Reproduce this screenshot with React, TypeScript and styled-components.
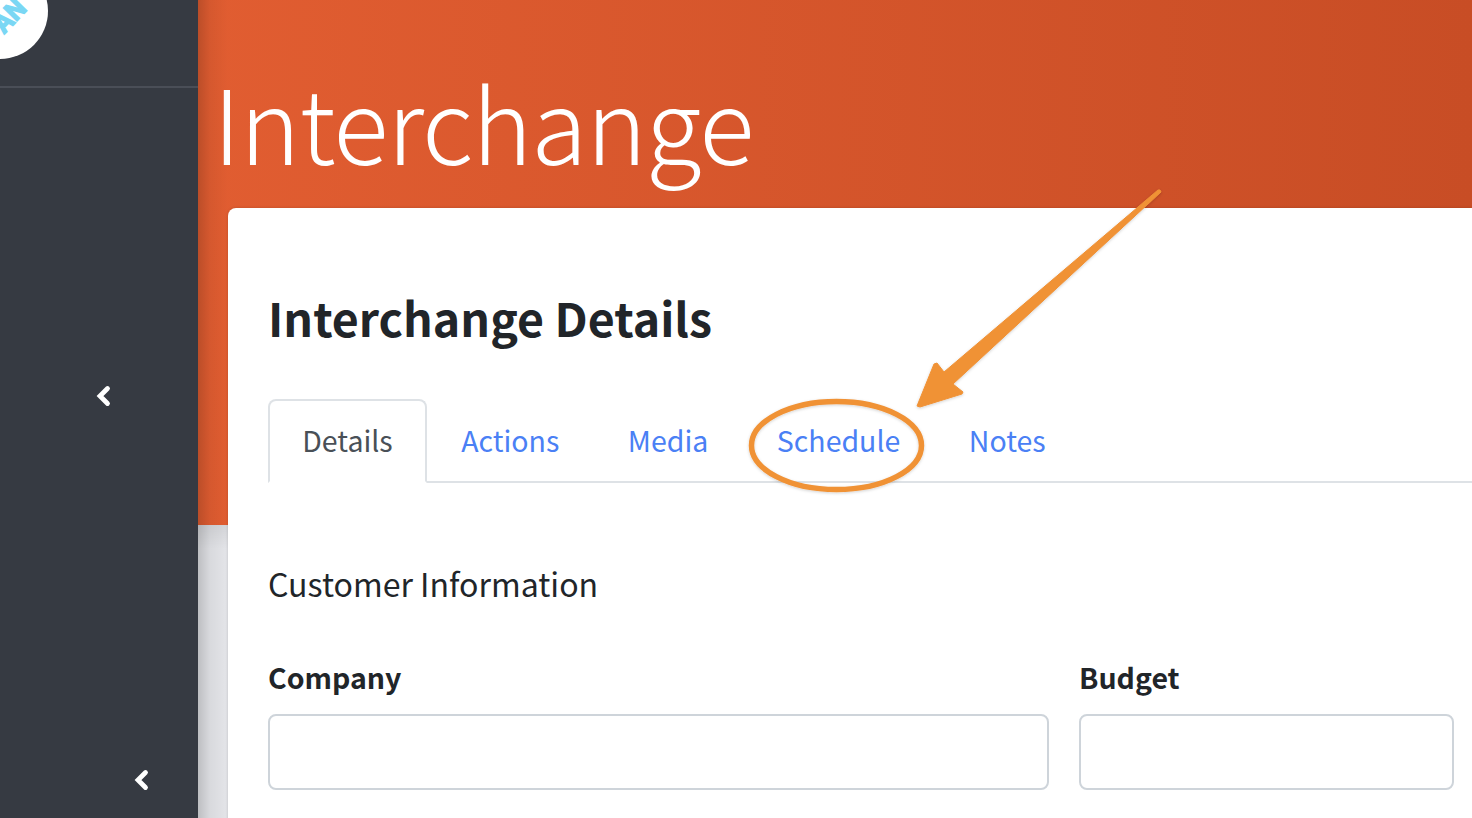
import React from "react";
import styled, { createGlobalStyle } from "styled-components";

const Global = createGlobalStyle`
  html, body { margin: 0; padding: 0; height: 100%; overflow: hidden; background: #e4e5e9; }
  #root { height: 100%; }
  * { box-sizing: border-box; }
`;

const Page = styled.div`
  position: relative;
  display: flex;
  width: 1472px;
  height: 818px;
  overflow: hidden;
  font-family: "Noto Sans CJK JP", "Noto Sans", sans-serif;
`;

const Sidebar = styled.aside`
  position: relative;
  flex: 0 0 198px;
  display: flex;
  flex-direction: column;
  background: #363a42;
  z-index: 2;
`;

const Brand = styled.div`
  position: relative;
  height: 88px;
  flex: none;
  border-bottom: 2px solid #4a4e57;
  overflow: hidden;
`;

const LogoDisc = styled.div`
  position: absolute;
  left: -48px;
  top: -37px;
  width: 96px;
  height: 96px;
  border-radius: 50%;
  background: #fff;
  overflow: hidden;
`;

const LogoText = styled.span`
  position: absolute;
  left: 39px;
  top: 38px;
  font-size: 25px;
  line-height: 26px;
  font-weight: 700;
  color: #7ad7f4;
  -webkit-text-stroke: 1.5px #7ad7f4;
  transform: rotate(-46deg);
`;

const SideNav = styled.div`
  flex: 1;
  display: flex;
  flex-direction: column;
  padding: 297px 0 27px 95px;
  justify-content: space-between;
`;

const Toggle = styled.svg<{ $shift?: number }>`
  display: block;
  width: 18px;
  height: 22px;
  margin-left: ${(p) => p.$shift ?? 0}px;
`;

const Main = styled.main`
  flex: 1;
  min-width: 0;
  position: relative;
  background: #e4e5e9;
  &::before {
    content: "";
    position: absolute;
    left: 0;
    top: 0;
    bottom: 0;
    width: 30px;
    background: linear-gradient(90deg, rgba(0, 0, 0, 0.17), rgba(0, 0, 0, 0.05) 40%, rgba(0, 0, 0, 0));
    z-index: 1;
    pointer-events: none;
  }
`;

const Hero = styled.header`
  position: relative;
  height: 525px;
  padding: 58px 0 0 15px;
  background: linear-gradient(90deg, #e15d31 0%, #c84d25 100%);
  &::after {
    content: "";
    position: absolute;
    left: 0;
    right: 0;
    top: 100%;
    height: 24px;
    background: linear-gradient(180deg, rgba(0, 0, 0, 0.07), rgba(0, 0, 0, 0));
  }
`;

const HeroTitle = styled.h1`
  margin: 0;
  font-size: 102.4px;
  font-weight: 300;
  line-height: 124px;
  color: #fff;
  letter-spacing: -1px;
`;

const Card = styled.section`
  position: relative;
  z-index: 2;
  margin: -317px 0 0 30px;
  height: 700px;
  padding: 77px 0 0 40px;
  background: #fff;
  border-radius: 8px 0 0 0;
  box-shadow: 0 0 3px rgba(0, 0, 0, 0.18);
`;

const CardTitle = styled.h2`
  margin: 0 0 50px;
  font-size: 46.5px;
  line-height: 64px;
  font-weight: 700;
  color: #212529;
`;

const Tabs = styled.nav`
  display: flex;
  height: 84px;
  border-bottom: 2px solid #dee2e6;
`;

const Tab = styled.a<{ $active?: boolean }>`
  display: block;
  height: 84px;
  padding: 18px 32.25px 0;
  font-size: 28.5px;
  line-height: 42px;
  color: ${(p) => (p.$active ? "#495057" : "#4a80f5")};
  background: ${(p) => (p.$active ? "#fff" : "transparent")};
  border: 2px solid ${(p) => (p.$active ? "#dee2e6" : "transparent")};
  border-bottom-color: ${(p) => (p.$active ? "#fff" : "transparent")};
  border-radius: 8px 8px 0 0;
`;

const SectionTitle = styled.h3`
  margin: 77px 0 51px;
  font-size: 32.1px;
  line-height: 46px;
  font-weight: 400;
  color: #212529;
`;

const FormRow = styled.div`
  display: grid;
  grid-template-columns: 781px 375px;
  column-gap: 30px;
`;

const Field = styled.div`
  display: flex;
  flex-direction: column;
  gap: 17px;
`;

const Label = styled.label`
  font-size: 28.5px;
  line-height: 40px;
  font-weight: 700;
  color: #212529;
`;

const Input = styled.input`
  height: 76px;
  border: 2px solid #ced4da;
  border-radius: 8px;
  background: #fff;
`;

const Annotation = styled.svg`
  position: absolute;
  left: 0;
  top: 0;
  width: 1472px;
  height: 818px;
  z-index: 5;
  pointer-events: none;
`;

const Chevron = ({ shift }: { shift?: number }) => (
  <Toggle $shift={shift} viewBox="0 0 18 22">
    <path d="M12.5 3.5 L5 11 L12.5 18.5" fill="none" stroke="#fff" strokeWidth="4.8" strokeLinecap="round" strokeLinejoin="miter" />
  </Toggle>
);

export default function App() {
  return (
    <Page>
      <Global />
      <Sidebar>
        <Brand>
          <LogoDisc>
            <LogoText>AN</LogoText>
          </LogoDisc>
        </Brand>
        <SideNav>
          <Chevron />
          <Chevron shift={38} />
        </SideNav>
      </Sidebar>
      <Main>
        <Hero>
          <HeroTitle>Interchange</HeroTitle>
        </Hero>
        <Card>
          <CardTitle>Interchange Details</CardTitle>
          <Tabs>
            <Tab $active>Details</Tab>
            <Tab>Actions</Tab>
            <Tab>Media</Tab>
            <Tab>Schedule</Tab>
            <Tab>Notes</Tab>
          </Tabs>
          <SectionTitle>Customer Information</SectionTitle>
          <FormRow>
            <Field>
              <Label>Company</Label>
              <Input />
            </Field>
            <Field>
              <Label>Budget</Label>
              <Input />
            </Field>
          </FormRow>
        </Card>
      </Main>
      <Annotation viewBox="0 0 1472 818">
        <defs>
          <filter id="soft" x="-10%" y="-10%" width="120%" height="120%">
            <feDropShadow dx="0" dy="1" stdDeviation="1.5" floodColor="#000" floodOpacity="0.18" />
          </filter>
        </defs>
        <g filter="url(#soft)">
          <path
            d="M1160 190 L1161 192 L953 384 L963 392 L962 394 L920 407 L917 406 L934 364 L937 363 L944 372 L1158 190 Z"
            fill="#f09236"
            stroke="#f09236"
            strokeWidth="1"
            strokeLinejoin="round"
          />
          <ellipse cx="836.5" cy="445.5" rx="85" ry="44" fill="none" stroke="#f09236" strokeWidth="5.5" />
        </g>
      </Annotation>
    </Page>
  );
}
